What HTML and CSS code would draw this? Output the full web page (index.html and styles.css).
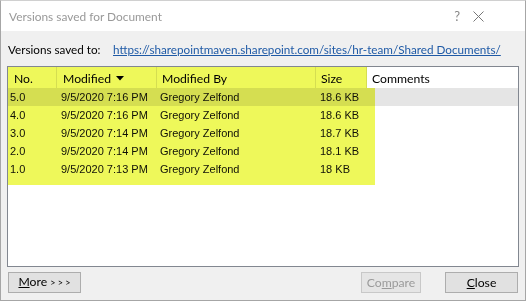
FILE: index.html
```html
<!DOCTYPE html>
<html>
<head>
<meta charset="utf-8">
<link rel="stylesheet" href="styles.css">
</head>
<body>
<div class="window">
  <div class="titlebar">
    <span class="title">Versions saved for Document</span>
    <span class="help">?</span>
    <svg class="close-x" width="11" height="11" viewBox="0 0 11 11"><path d="M0.5 0.5 L10.5 10.5 M10.5 0.5 L0.5 10.5" stroke="#777" stroke-width="1" fill="none"/></svg>
  </div>
  <div class="body">
    <div class="saved-to">
      <span class="label">Versions saved to:</span>
      <a class="link" href="#">https://sharepointmaven.sharepoint.com/sites/hr-team/Shared Documents/</a>
    </div>
    <div class="listbox">
      <div class="row header">
        <div class="c c1">No.</div>
        <div class="c c2">Modified <svg class="sort" width="8" height="5" viewBox="0 0 8 5"><path d="M0 0 H8 L4 4.5 Z" fill="#000"/></svg></div>
        <div class="c c3">Modified By</div>
        <div class="c c4">Size</div>
        <div class="c c5">Comments</div>
      </div>
      <div class="row selected">
        <div class="c c1">5.0</div><div class="c c2">9/5/2020 7:16 PM</div><div class="c c3">Gregory Zelfond</div><div class="c c4">18.6 KB</div><div class="c c5"></div>
      </div>
      <div class="row">
        <div class="c c1">4.0</div><div class="c c2">9/5/2020 7:16 PM</div><div class="c c3">Gregory Zelfond</div><div class="c c4">18.6 KB</div><div class="c c5"></div>
      </div>
      <div class="row">
        <div class="c c1">3.0</div><div class="c c2">9/5/2020 7:14 PM</div><div class="c c3">Gregory Zelfond</div><div class="c c4">18.7 KB</div><div class="c c5"></div>
      </div>
      <div class="row">
        <div class="c c1">2.0</div><div class="c c2">9/5/2020 7:14 PM</div><div class="c c3">Gregory Zelfond</div><div class="c c4">18.1 KB</div><div class="c c5"></div>
      </div>
      <div class="row">
        <div class="c c1">1.0</div><div class="c c2">9/5/2020 7:13 PM</div><div class="c c3">Gregory Zelfond</div><div class="c c4">18 KB</div><div class="c c5"></div>
      </div>
      <div class="highlight"></div>
    </div>
    <div class="buttons">
      <button class="btn more"><u>M</u>ore <span class="arrows">&gt; &gt; &gt;</span></button>
      <span class="spacer"></span>
      <button class="btn compare" disabled>Co<u>m</u>pare</button>
      <button class="btn closebtn"><u>C</u>lose</button>
    </div>
  </div>
</div>
</body>
</html>
```

FILE: styles.css
```css
* { box-sizing: border-box; }
html, body { margin: 0; padding: 0; background: #fff; }
body {
  font-family: "Lato", "Noto Sans", sans-serif;
  font-size: 12px;
  color: #000;
}
.window {
  width: 526px;
  height: 301px;
  border: 1px solid #a6a6a6;
  border-top-color: #d0d0d0;
  display: flex;
  flex-direction: column;
  background: #f0f0f0;
}
.titlebar {
  height: 30px;
  background: #fff;
  display: flex;
  align-items: center;
  padding-left: 8px;
  flex-shrink: 0;
}
.title {
  color: #999;
  font-size: 11.9px;
  flex: 1;
}
.help {
  color: #888;
  font-size: 13px;
  margin-right: 13px;
  margin-top: -1px;
}
.close-x { margin-right: 41px; }
.body {
  flex: 1;
  display: flex;
  flex-direction: column;
  padding: 0 6px 7px 6px;
}
.saved-to {
  height: 35px;
  display: flex;
  align-items: center;
  padding-left: 1px;
  padding-top: 1px;
  white-space: nowrap;
}
.label { width: 105px; flex-shrink: 0; font-size: 11.7px; }
.link {
  color: #1f5aa6;
  text-decoration: underline;
  font-size: 11.7px;
}
.listbox {
  position: relative;
  height: 201px;
  border: 1px solid #828790;
  background: #fff;
  flex-shrink: 0;
}
.row {
  display: flex;
  height: 18px;
  align-items: center;
  line-height: 18px;
  font-family: "Liberation Sans", sans-serif;
  font-size: 11px;
  color: #111;
}
.row.header { height: 21px; font-family: "Lato", sans-serif; font-size: 12.2px; color: #000; }
.c { height: 100%; white-space: nowrap; overflow: hidden; }
.c1 { width: 49px; padding-left: 2px; }
.c2 { width: 100px; padding-left: 4px; }
.c3 { width: 159px; padding-left: 3px; }
.c4 { width: 51px; padding-left: 4px; }
.c5 { flex: 1; padding-left: 5px; }
.header .c {
  line-height: 21px;
  padding-top: 1px;
  border-right: 1px solid #e5e5e5;
}
.header .c1 { padding-left: 6px; }
.header .c2 { padding-left: 6px; }
.header .c3 { padding-left: 5px; }
.header .c4 { padding-left: 5px; }
.header .c5 { border-right: none; padding-left: 5px; }
.sort { vertical-align: middle; margin-left: 2px; margin-top: -3px; }
.row.selected { background: #e5e5e5; }
.highlight {
  position: absolute;
  left: 0;
  top: 0;
  width: 367px;
  height: 118px;
  background: #eef85a;
  mix-blend-mode: multiply;
  clip-path: polygon(0 0, 359px 0, 359px 21px, 367px 21px, 367px 118px, 0 118px);
  pointer-events: none;
}
.buttons {
  display: flex;
  margin-top: 5px;
  padding-left: 1px;
  padding-right: 1px;
}
.spacer { flex: 1; }
.btn {
  height: 21px;
  border: 1px solid #adadad;
  background: #e1e1e1;
  font-family: "Lato", sans-serif;
  font-size: 12.2px;
  color: #000;
  padding: 0;
  line-height: 18px;
}
.more { width: 73px; }
.arrows { font-size: 9px; letter-spacing: 0; }
.compare {
  width: 60px;
  color: #9a9a9a;
  border-color: #c8c8c8;
  background: #e5e5e5;
  margin-right: 24px;
}
.closebtn { width: 73px; }
```
